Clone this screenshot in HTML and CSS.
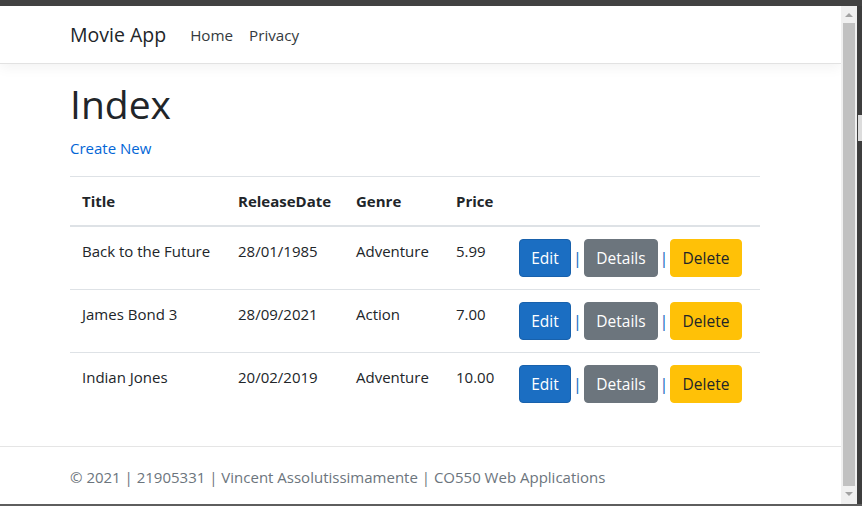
FILE: index.html
```html
<!DOCTYPE html>
<html lang="en">
<head>
<meta charset="utf-8">
<title>Index - Movie App</title>
<link rel="stylesheet" href="styles.css">
</head>
<body>
<div class="window">
  <div class="topbar"></div>
  <div class="viewport">
    <div class="page">
      <header class="navbar">
        <div class="nav-inner">
          <a class="brand" href="#">Movie App</a>
          <nav class="nav">
            <a class="nav-link" href="#">Home</a>
            <a class="nav-link" href="#">Privacy</a>
          </nav>
        </div>
      </header>
      <main class="container">
        <h1 class="title">Index</h1>
        <p class="create"><a href="#">Create New</a></p>
        <table class="table">
          <colgroup>
            <col class="c-title">
            <col class="c-date">
            <col class="c-genre">
            <col class="c-price">
            <col class="c-actions">
          </colgroup>
          <thead>
            <tr><th>Title</th><th>ReleaseDate</th><th>Genre</th><th>Price</th><th></th></tr>
          </thead>
          <tbody>
            <tr>
              <td>Back to the Future</td><td>28/01/1985</td><td>Adventure</td><td>5.99</td>
              <td><div class="actions"><a class="btn btn-edit" href="#">Edit</a><span class="sep">|</span><a class="btn btn-details" href="#">Details</a><span class="sep sep2">|</span><a class="btn btn-delete" href="#">Delete</a></div></td>
            </tr>
            <tr>
              <td>James Bond 3</td><td>28/09/2021</td><td>Action</td><td>7.00</td>
              <td><div class="actions"><a class="btn btn-edit" href="#">Edit</a><span class="sep">|</span><a class="btn btn-details" href="#">Details</a><span class="sep sep2">|</span><a class="btn btn-delete" href="#">Delete</a></div></td>
            </tr>
            <tr>
              <td>Indian Jones</td><td>20/02/2019</td><td>Adventure</td><td>10.00</td>
              <td><div class="actions"><a class="btn btn-edit" href="#">Edit</a><span class="sep">|</span><a class="btn btn-details" href="#">Details</a><span class="sep sep2">|</span><a class="btn btn-delete" href="#">Delete</a></div></td>
            </tr>
          </tbody>
        </table>
      </main>
      <footer class="footer">
        <div class="footer-inner">&copy; 2021 | 21905331 | Vincent Assolutissimamente | CO550 Web Applications</div>
      </footer>
    </div>
    <div class="scrollbar">
      <span class="arrow arrow-up"></span>
      <div class="thumb"></div>
      <span class="arrow arrow-down"></span>
    </div>
    <div class="edge"><div class="edge-mark"></div></div>
  </div>
  <div class="bottombar"></div>
</div>
</body>
</html>
```

FILE: styles.css
```css
* { box-sizing: border-box; }

html, body {
  margin: 0;
  padding: 0;
  width: 862px;
  height: 506px;
  overflow: hidden;
  background: #3d3d3d;
}

body {
  font-family: "Open Sans", "Noto Sans", sans-serif;
  font-size: 15px;
  line-height: 24px;
  color: #212529;
}

a { text-decoration: none; }

.window {
  display: flex;
  flex-direction: column;
  width: 862px;
  height: 506px;
}

.topbar {
  height: 6px;
  background: #424242;
  flex: none;
}

.viewport {
  display: flex;
  height: 498px;
  flex: none;
}

.bottombar {
  height: 2px;
  background: #5e5e5e;
  flex: none;
}

.page {
  width: 841px;
  height: 498px;
  overflow: hidden;
  background: #fff;
  display: flex;
  flex-direction: column;
}

/* navbar */
.navbar {
  flex: none;
  height: 58px;
  border-bottom: 1px solid #e2e2e2;
  box-shadow: 0 4px 12px rgba(0, 0, 0, 0.05);
  background: #fff;
  position: relative;
  z-index: 1;
}

.nav-inner {
  display: flex;
  align-items: center;
  height: 57px;
  padding: 1px 0 0 70px;
}

.brand {
  font-size: 19.5px;
  line-height: 30px;
  color: #212529;
  margin-right: 16px;
}

.nav {
  display: flex;
}

.nav-link {
  padding: 0 8px;
  font-size: 15.2px;
  color: #343a40;
}

/* main */
.container {
  flex: none;
  margin: 16px 0 0 70px;
  width: 690px;
  padding-bottom: 16px;
}

.title {
  margin: 0 0 8px;
  font-size: 39px;
  line-height: 48px;
  font-weight: 500;
}

.create {
  margin: 0 0 16px;
}

.create a {
  color: #0366d6;
}

.table {
  width: 690px;
  border-collapse: collapse;
  table-layout: fixed;
  margin-bottom: 15px;
}

.c-title { width: 156px; }
.c-date { width: 118px; }
.c-genre { width: 100px; }
.c-price { width: 63px; }
.c-actions { width: 253px; }

.table th,
.table td {
  padding: 12px;
  text-align: left;
  vertical-align: top;
  border-top: 1px solid #dee2e6;
  white-space: nowrap;
}

.table th {
  font-weight: 700;
  border-bottom: 2px solid #dee2e6;
}

.actions {
  display: flex;
  align-items: baseline;
}

.btn {
  display: inline-block;
  height: 38px;
  padding: 6px 0;
  border: 1px solid transparent;
  border-radius: 4px;
  text-align: center;
  font-size: 15.5px;
  line-height: 24px;
}

.btn-edit {
  width: 52px;
  background: #1b6ec2;
  border-color: #1861ac;
  color: #fff;
}

.btn-details {
  width: 74px;
  background: #6c757d;
  border-color: #6c757d;
  color: #fff;
}

.btn-delete {
  width: 72px;
  background: #ffc107;
  border-color: #ffc107;
  color: #212529;
}

.sep {
  width: 13px;
  text-align: center;
  font-size: 17px;
  color: #1b6ec2;
}

.sep2 { width: 12px; }

/* footer */
.footer {
  flex: none;
  border-top: 1px solid #e5e5e5;
  height: 61px;
}

.footer-inner {
  padding-left: 70px;
  line-height: 60px;
  color: #6c757d;
  white-space: nowrap;
}

/* scrollbar */
.scrollbar {
  width: 16px;
  height: 498px;
  background: #f0f0f0;
  display: flex;
  flex-direction: column;
  align-items: center;
  flex: none;
}

.arrow {
  width: 0;
  height: 0;
  border-left: 4px solid transparent;
  border-right: 4px solid transparent;
  flex: none;
}

.arrow-up {
  margin-top: 7px;
  border-bottom: 4px solid #a3a3a3;
}

.arrow-down {
  margin-top: 6px;
  border-top: 4px solid #a3a3a3;
}

.thumb {
  margin-top: 6px;
  width: 12px;
  height: 463px;
  background: #c1c1c1;
  flex: none;
}

.edge {
  width: 5px;
  height: 498px;
  background: #3d3d3d;
  flex: none;
  padding-top: 109px;
}

.edge-mark {
  margin-left: 1px;
  width: 4px;
  height: 26px;
  background: #dcdcdc;
}
```
